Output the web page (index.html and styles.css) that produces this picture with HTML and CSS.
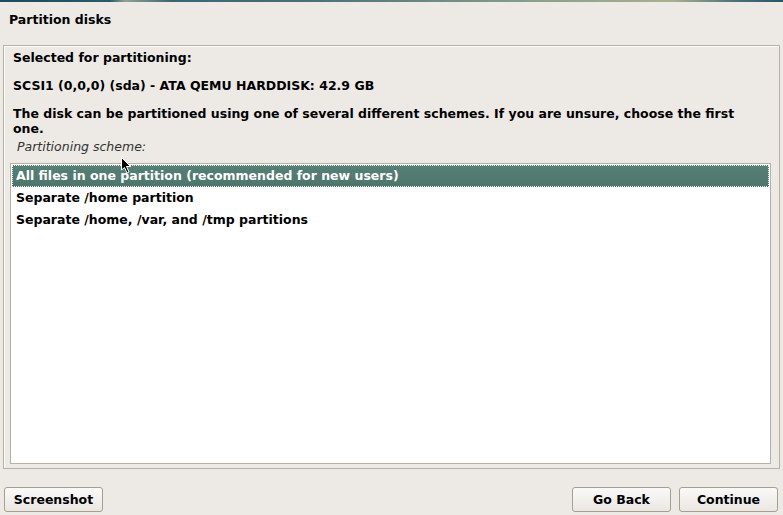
FILE: index.html
```html
<!DOCTYPE html>
<html>
<head>
<meta charset="utf-8">
<link rel="stylesheet" href="styles.css">
</head>
<body>
<div class="topline"></div>
<div class="window">
  <div class="title">Partition disks</div>
  <div class="frame">
    <p class="label">Selected for partitioning:</p>
    <p class="label">SCSI1 (0,0,0) (sda) - ATA QEMU HARDDISK: 42.9 GB</p>
    <p class="label desc">The disk can be partitioned using one of several different schemes. If you are unsure, choose the first one.</p>
    <p class="scheme">Partitioning scheme:</p>
    <div class="list">
      <div class="item selected">All files in one partition (recommended for new users)</div>
      <div class="item">Separate /home partition</div>
      <div class="item">Separate /home, /var, and /tmp partitions</div>
    </div>
  </div>
  <div class="buttons">
    <button class="btn">Screenshot</button>
    <div class="spacer"></div>
    <button class="btn">Go Back</button>
    <button class="btn">Continue</button>
  </div>
</div>
<svg class="cursor" width="12" height="18" viewBox="0 0 12 18"><path d="M0.5 0.5 L0.5 13 L3.5 10.5 L6 16 L8 15 L5.5 9.5 L9.5 9.5 Z" fill="#000" stroke="#fff" stroke-width="1"/></svg>
</body>
</html>
```
FILE: styles.css
```css
* { box-sizing: border-box; }
html, body { margin: 0; padding: 0; }
body {
  width: 783px;
  height: 515px;
  background: #edeae5;
  font-family: "DejaVu Sans", sans-serif;
  font-size: 12.5px;
  color: #000;
  position: relative;
  overflow: hidden;
}
.topline {
  height: 2px;
  background: linear-gradient(90deg, #1d4a5e 0%, #2a5a68 14%, #8fa294 16%, #3c6570 22%, #4a7078 40%, #8a9f8c 68%, #a8b090 86%, #4c6f78 94%, #2a5468 100%);
}
.window {
  padding: 0 3px 0 3px;
}
.title {
  font-weight: bold;
  padding: 10px 0 0 6px;
  height: 43px;
}
.frame {
  border: 1px solid #b9b0a3;
  box-shadow: inset 1px 1px 0 #fdfcfb;
  height: 424px;
  padding: 4px 8px 4px 6px;
  display: flex;
  flex-direction: column;
}
.label {
  margin: 0 0 12px 3px;
  font-weight: bold;
  line-height: 16px;
}
.desc {
  line-height: 15px;
  margin-bottom: 3px;
  margin-right: 14px;
}
.scheme {
  margin: 0 0 9px 7px;
  font-style: italic;
  color: #333;
  line-height: 15px;
}
.list {
  flex: 1;
  background: #fff;
  border: 1px solid #b9b0a3;
  padding: 1px;
}
.item {
  height: 22px;
  line-height: 22px;
  padding-left: 4px;
  font-weight: bold;
}
.item.selected {
  background: linear-gradient(#567f76, #4e766b);
  color: #fff;
  outline: 1px dotted #e8efe9;
  outline-offset: -1px;
}
.buttons {
  display: flex;
  align-items: center;
  gap: 8px;
  padding: 18px 2px 0 1px;
}
.spacer { flex: 1; }
.btn {
  font-family: "DejaVu Sans", sans-serif;
  font-weight: bold;
  font-size: 12.5px;
  color: #000;
  width: 99px;
  height: 25px;
  border: 1px solid #a89e90;
  border-radius: 3px;
  background: linear-gradient(#faf9f8, #ebe8e3);
  padding: 0;
}
.cursor {
  position: absolute;
  left: 121px;
  top: 157px;
}
```
